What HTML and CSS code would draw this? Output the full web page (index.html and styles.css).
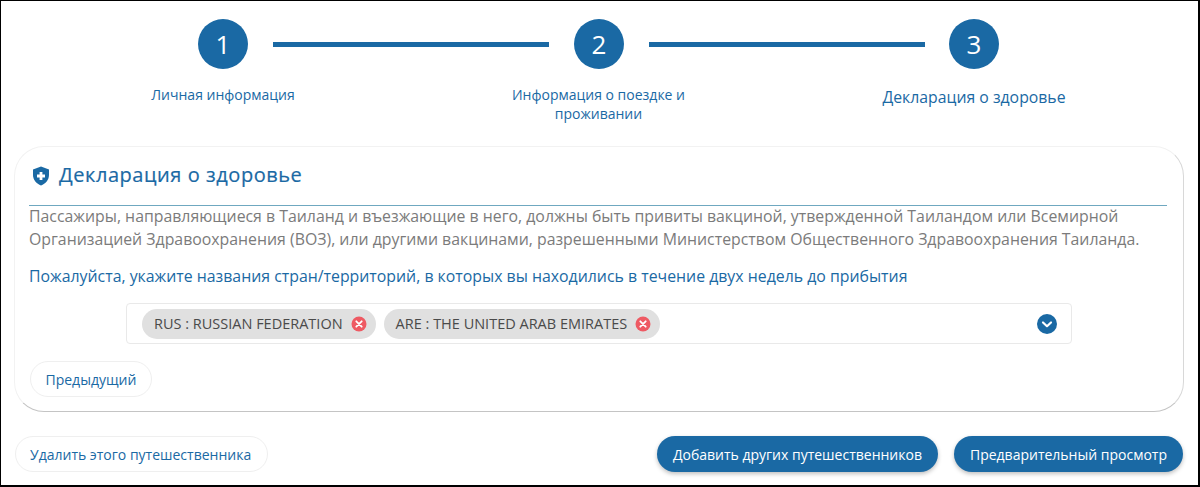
FILE: index.html
```html
<!DOCTYPE html>
<html lang="ru">
<head>
  <meta charset="UTF-8">
  <title>Декларация о здоровье</title>
  <link rel="stylesheet" href="styles.css">
</head>
<body>

<div class="frame">
  <div class="steps">
    <div class="step-circle">1</div>
    <div class="step-line"></div>
    <div class="step-circle">2</div>
    <div class="step-line"></div>
    <div class="step-circle">3</div>
  </div>
  <div class="step-labels">
    <div class="step-label">Личная информация</div>
    <div class="step-label">Информация о поездке и проживании</div>
    <div class="step-label current">Декларация о здоровье</div>
  </div>

  <div class="card">
    <h2 class="card-title">
      <svg class="shield" viewBox="0 0 18 20" width="18" height="20">
        <path d="M9 0.5 L17 3.5 V9 C17 14 13.5 17.8 9 19.5 C4.5 17.8 1 14 1 9 V3.5 Z" fill="#1a69a4"/>
        <path d="M7.6 6 H10.4 V8.6 H13 V11.4 H10.4 V14 H7.6 V11.4 H5 V8.6 H7.6 Z" fill="#fff"/>
      </svg>
      Декларация о здоровье
    </h2>
    <p class="card-text">Пассажиры, направляющиеся в Таиланд и въезжающие в него, должны быть привиты вакциной, утвержденной Таиландом или Всемирной Организацией Здравоохранения (ВОЗ), или другими вакцинами, разрешенными Министерством Общественного Здравоохранения Таиланда.</p>
    <p class="card-question">Пожалуйста, укажите названия стран/территорий, в которых вы находились в течение двух недель до прибытия</p>

    <div class="select">
      <span class="chip">RUS : RUSSIAN FEDERATION
        <svg class="chip-x" viewBox="0 0 16 16" width="16" height="16">
          <circle cx="8" cy="8" r="7.5" fill="#ee5a63"/>
          <path d="M5.3 5.3 L10.7 10.7 M10.7 5.3 L5.3 10.7" stroke="#fff" stroke-width="1.8" stroke-linecap="round"/>
        </svg>
      </span>
      <span class="chip">ARE : THE UNITED ARAB EMIRATES
        <svg class="chip-x" viewBox="0 0 16 16" width="16" height="16">
          <circle cx="8" cy="8" r="7.5" fill="#ee5a63"/>
          <path d="M5.3 5.3 L10.7 10.7 M10.7 5.3 L5.3 10.7" stroke="#fff" stroke-width="1.8" stroke-linecap="round"/>
        </svg>
      </span>
      <svg class="select-arrow" viewBox="0 0 20 20" width="20" height="20">
        <circle cx="10" cy="10" r="10" fill="#1a69a4"/>
        <path d="M6 8.5 L10 12.2 L14 8.5" fill="none" stroke="#fff" stroke-width="2.2" stroke-linecap="round" stroke-linejoin="round"/>
      </svg>
    </div>

    <button class="btn btn-light">Предыдущий</button>
  </div>

  <div class="actions">
    <button class="btn btn-light btn-wide">Удалить этого путешественника</button>
    <div class="actions-right">
      <button class="btn btn-blue">Добавить других путешественников</button>
      <button class="btn btn-blue">Предварительный просмотр</button>
    </div>
  </div>
</div>

</body>
</html>
```
FILE: styles.css
```css
* {
  box-sizing: border-box;
  margin: 0;
  padding: 0;
  font-family: 'Open Sans', sans-serif;
}

body {
  width: 1200px;
  height: 487px;
  background: #fff;
  overflow: hidden;
}

.frame {
  width: 1200px;
  height: 487px;
  border: 1px solid #000;
  border-width: 1px 2px 2px 1px;
  padding-top: 18px;
}

.steps {
  display: flex;
  align-items: center;
  padding-left: 197px;
}

.step-circle {
  width: 50px;
  height: 50px;
  border-radius: 50%;
  background: #1a69a4;
  color: #fff;
  font-size: 26px;
  display: flex;
  justify-content: center;
  align-items: center;
  flex-shrink: 0;
}

.step-line {
  width: 276px;
  height: 5px;
  margin: 0 25px;
  background: #1a69a4;
}

.step-line + .step-circle + .step-line {
  margin-right: 24px;
}

.step-labels {
  display: flex;
  gap: 175.5px;
  height: 77px;
  padding: 16px 0 0 122px;
}

.step-label {
  width: 200px;
  font-size: 14px;
  line-height: 19px;
  color: #1a69a4;
  text-align: center;
}

.step-label.current {
  font-size: 15.8px;
  line-height: 21px;
  padding-top: 2px;
}

.card {
  width: 1170px;
  height: 266px;
  margin-left: 13px;
  padding: 0 16px 0 14px;
  background: #fff;
  border-radius: 30px;
  border: 1px solid #f2f2f2;
  border-right-color: #d8d8d8;
  border-bottom-color: #c4c4c4;
}

.card-title {
  display: flex;
  align-items: flex-start;
  gap: 9px;
  height: 59px;
  padding: 14px 0 0 3px;
  border-bottom: 1px solid #6fa8c0;
  font-size: 20px;
  line-height: 28px;
  font-weight: 400;
  letter-spacing: 0.55px;
  color: #1a69a4;
  -webkit-text-stroke: 0.2px #1a69a4;
}

.shield {
  margin-top: 5px;
}

.card-text {
  margin-top: -1px;
  font-size: 15.85px;
  line-height: 23px;
  color: #7b7b7b;
}

.card-question {
  margin-top: 14px;
  font-size: 15.85px;
  line-height: 23px;
  color: #1a69a4;
}

.select {
  display: flex;
  align-items: center;
  gap: 8px;
  width: 946px;
  height: 41px;
  margin: 15px 0 0 97px;
  padding: 0 14px 0 15px;
  border: 1px solid #e9e9e9;
  border-radius: 4px;
}

.chip {
  display: flex;
  align-items: center;
  gap: 8px;
  height: 30px;
  padding: 0 9px 0 12px;
  border-radius: 15px;
  background: #e0e0e0;
  color: #4a4a4a;
  font-size: 14.5px;
}

.select-arrow {
  margin-left: auto;
}

.btn {
  border-radius: 19px;
  font-size: 14px;
  cursor: pointer;
  white-space: nowrap;
}

.btn-light {
  background: #fff;
  color: #1a69a4;
  border: 1px solid #efefef;
  height: 36px;
  padding: 0 14.5px;
}

.btn-wide {
  padding: 0 16px 0 14px;
}

.card .btn-light {
  margin: 17px 0 0 1px;
}

.btn-blue {
  background: #1a69a4;
  color: #fff;
  border: none;
  height: 36px;
  padding: 0 16px;
  box-shadow: 0 2px 4px rgba(0,0,0,0.25);
}

.actions {
  display: flex;
  justify-content: space-between;
  align-items: center;
  width: 1168px;
  margin: 24px 0 0 14px;
}

.actions-right {
  display: flex;
  gap: 16px;
}
```
